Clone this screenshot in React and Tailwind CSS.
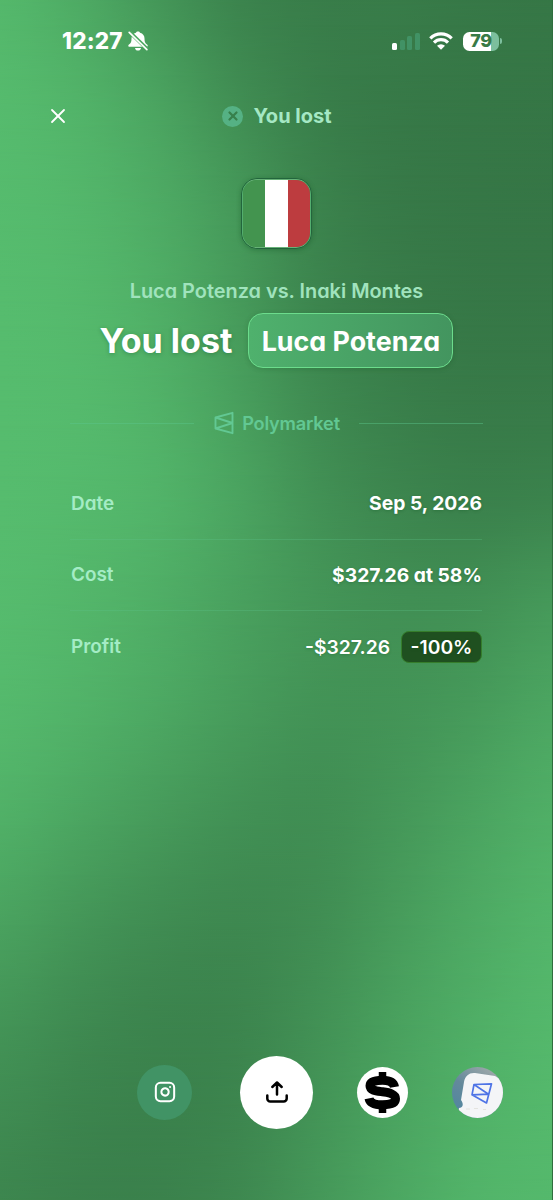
import { X, Instagram } from "lucide-react";

// Darkness of the backdrop, one row every 100px, from 0 (light) to 1 (dark)
const shades = [
  [0.06, 0.24, 0.52, 0.78, 0.88, 0.9, 0.95, 0.97],
  [0.02, 0.13, 0.35, 0.65, 0.86, 0.94, 0.97, 0.98],
  [0.01, 0.08, 0.25, 0.51, 0.8, 0.93, 0.97, 0.98],
  [0, 0.05, 0.2, 0.47, 0.77, 0.9, 0.96, 0.96],
  [0, 0.03, 0.15, 0.4, 0.69, 0.85, 0.92, 0.92],
  [0, 0.04, 0.13, 0.34, 0.6, 0.76, 0.83, 0.8],
  [0.01, 0.08, 0.2, 0.38, 0.54, 0.63, 0.62, 0.5],
  [0.04, 0.13, 0.27, 0.44, 0.57, 0.57, 0.48, 0.33],
  [0.14, 0.28, 0.44, 0.58, 0.64, 0.53, 0.36, 0.2],
  [0.32, 0.49, 0.63, 0.71, 0.66, 0.47, 0.27, 0.12],
  [0.52, 0.67, 0.77, 0.77, 0.62, 0.4, 0.21, 0.07],
  [0.67, 0.78, 0.82, 0.77, 0.57, 0.35, 0.16, 0.05],
  [0.76, 0.82, 0.82, 0.73, 0.52, 0.3, 0.12, 0.05],
];

const light = [86, 188, 110];
const dark = [53, 117, 69];

const smooth = (list, t) => {
  const i = Math.min(Math.floor(t), list.length - 2);
  const f = t - i;
  const p1 = list[i];
  const p2 = list[i + 1];
  const p0 = list[i - 1] ?? p1;
  const p3 = list[i + 2] ?? p2;
  return (
    p1 +
    0.5 *
      f *
      (p2 - p0 + f * (2 * p0 - 5 * p1 + 4 * p2 - p3 + f * (3 * (p1 - p2) + p3 - p0)))
  );
};

const shadeColor = (v) => {
  const s = Math.max(0, Math.min(1, v));
  return `rgb(${light.map((c, i) => (c + (dark[i] - c) * s).toFixed(1)).join(",")})`;
};

const STEP = 25;

const bands = Array.from({ length: 1200 / STEP + 1 }, (_, n) => {
  const row = shades[0].map((_, col) =>
    smooth(shades.map((r) => r[col]), (n * STEP) / 100)
  );
  const stops = Array.from({ length: 22 }, (_, k) => shadeColor(smooth(row, k / 3)));
  return `linear-gradient(to right, ${stops.join(",")})`;
});

const Backdrop = () => (
  <div className="[grid-area:1/1] grid h-[1200px] overflow-hidden">
    {bands.map((background, n) => {
      const mask =
        n === 0
          ? undefined
          : `linear-gradient(to bottom, transparent ${(n - 1) * STEP}px, black ${n * STEP}px)`;
      return (
        <div
          key={n}
          className="[grid-area:1/1] h-[1200px]"
          style={{ background, maskImage: mask }}
        />
      );
    })}
  </div>
);

const PolymarketLogo = ({ className }) => (
  <svg viewBox="0 0 20 24" fill="none" stroke="currentColor" className={className}>
    <path
      d="M18.500 1.800v20.400L1.500 17.500V6.500zM1.500 6.500l17 5.500-17 5.500"
      strokeWidth="1.900"
      strokeLinejoin="round"
    />
  </svg>
);

const MutedBell = () => (
  <svg viewBox="0 0 20 20" className="h-5 w-5">
    <path
      d="M10 .5c-1 0-1.800.5-2 1.300C5 2.600 3.500 4.800 3.500 7.600c0 3.400-.6 4.700-2.500 6-1.200.8-.8 2.200.5 2.200h17c1.300 0 1.700-1.400.5-2.200-1.900-1.300-2.500-2.600-2.500-6 0-2.800-1.500-5-4.500-5.800C11.800 1 11 .5 10 .5zM7 16.900h6c-.2 1.600-1.500 2.700-3 2.700s-2.800-1.100-3-2.700z"
      fill="white"
    />
    <path d="M1.500 1 19.500 18.500" stroke="#4fab63" strokeWidth="3.800" />
    <path d="M1.200 1.400 18.900 18.600" stroke="white" strokeWidth="1.600" strokeLinecap="round" />
  </svg>
);

const StatusBar = () => (
  <div className="flex h-[82px] items-center justify-between pl-[62px] pr-[50px]">
    <div className="flex items-center gap-1">
      <span className="w-[62px] text-[22.500px] font-extrabold tracking-[0.2px] whitespace-nowrap">
        12:27
      </span>
      <MutedBell />
    </div>
    <div className="flex items-center">
      <div className="flex items-end gap-[2.700px]">
        <span className="h-[7px] w-[5px] rounded-[1.500px] bg-white" />
        <span className="h-[10px] w-[5px] rounded-[1.500px] bg-[#419265]" />
        <span className="h-[14px] w-[5px] rounded-[1.500px] bg-[#419265]" />
        <span className="h-[17px] w-[5px] rounded-[1.500px] bg-[#419265]" />
      </div>
      <svg viewBox="0 0 24 18" className="ml-[9px] h-[18px] w-6" fill="none" stroke="white">
        <path d="M1.300 6.300a15.200 15.200 0 0 1 21.400 0" strokeWidth="3.200" />
        <path d="M5 10.600a9.900 9.900 0 0 1 14 0" strokeWidth="3.200" />
        <path d="M12 17.800 8 13.800a5.700 5.700 0 0 1 8 0z" fill="white" stroke="none" />
      </svg>
      <div className="ml-[10px] flex h-[19px] w-9 items-center justify-center rounded-[6.500px] bg-linear-to-r from-white from-79% to-[#7cbf9d] to-79%">
        <span className="text-[18px] font-extrabold leading-none tracking-[-0.3px] text-[#387a46]">
          79
        </span>
      </div>
      <span className="ml-[1px] h-[6px] w-[2px] rounded-r-full bg-[#7cbf9d]" />
    </div>
  </div>
);

const Header = () => (
  <div className="grid h-[68px] grid-cols-[1fr_auto_1fr] items-center">
    <X className="ml-[46px] h-6 w-6" strokeWidth={1.8} />
    <div className="ml-[2px] flex items-center gap-[10px]">
      <span className="flex h-[21px] w-[21px] items-center justify-center rounded-full bg-[#55b184]">
        <X className="h-[14px] w-[14px] text-[#37804b]" strokeWidth={3.8} />
      </span>
      <span className="text-[20px] font-bold text-[#a5e8c4]">You lost</span>
    </div>
  </div>
);

const ItalyFlag = () => (
  <div className="mx-auto mt-[28px] flex h-[71px] w-[71px] overflow-hidden rounded-[16px] border border-[#22653c] shadow-[0_1px_5px_rgba(0,60,20,0.3)]">
    <div className="flex flex-1 overflow-hidden rounded-[15px] border border-[#59b577]/80 border-y-[#8fd0a4]/50 bg-[#43944f]">
      <span className="w-[22px] bg-[#43944f]" />
      <span className="w-[23px] bg-white" />
      <span className="flex-1 bg-[#bd3c3f]" />
    </div>
  </div>
);

const Title = () => (
  <div className="mt-[28px] ml-px flex flex-col items-center">
    <p className="text-[19.900px] font-semibold leading-7 text-[#a0e3bd]">
      Luca Potenza vs. Inaki Montes
    </p>
    <div className="mt-2 flex items-center gap-4">
      <h1 className="pt-px text-[34px] font-bold leading-none text-shadow-[0_1px_4px_rgba(0,70,25,0.3)]">
        You lost
      </h1>
      <div className="flex h-[55px] w-[205px] items-center justify-center rounded-[15px] border border-[#6cdc8c] bg-linear-to-r from-[#4fb16d] to-[#43955f] pt-px text-[26.800px] font-bold shadow-[0_1px_5px_rgba(0,70,25,0.2)]">
        Luca Potenza
      </div>
    </div>
  </div>
);

const BrandDivider = () => (
  <div className="ml-[70px] mr-[69px] mt-[41px] flex h-7 items-center text-[#62c893]">
    <span className="h-px flex-1 bg-[#5cc58c]/45" />
    <PolymarketLogo className="ml-5 h-6 w-5" />
    <span className="ml-2 mr-[19px] pt-px text-[18.200px] font-semibold tracking-[-0.2px] [font-feature-settings:normal]">
      Polymarket
    </span>
    <span className="h-px flex-1 bg-[#5cc58c]/45" />
  </div>
);

const DetailRow = ({ label, children }) => (
  <div className="flex h-[71.500px] items-center justify-between pl-px pt-px">
    <span className="text-[18.900px] font-semibold text-[#a4ecc5]">{label}</span>
    <span className="flex items-center text-[19.300px] font-bold text-shadow-[0_1px_3px_rgba(0,70,25,0.25)]">
      {children}
    </span>
  </div>
);

const ActionBar = () => (
  <div className="mt-auto mb-[71px] flex h-[74px] items-center pl-[137px]">
    <button className="flex h-[55px] w-[55px] items-center justify-center rounded-full bg-[#419365]">
      <Instagram className="h-[22px] w-[22px]" strokeWidth={2.2} />
    </button>
    <button className="ml-12 flex h-[73px] w-[73px] items-center justify-center rounded-full bg-white">
      <svg
        viewBox="0 0 24 24"
        className="h-6 w-6"
        fill="none"
        stroke="black"
        strokeWidth="2.500"
        strokeLinecap="round"
        strokeLinejoin="round"
      >
        <path d="M12 14.500V3M7.300 7 12 2.500 16.700 7M2.300 15.500v3a3 3 0 0 0 3 3h13.400a3 3 0 0 0 3-3v-3" />
      </svg>
    </button>
    <button className="ml-11 flex h-[51px] w-[51px] items-center justify-center rounded-full bg-white">
      <svg viewBox="0 0 51 51" className="h-full w-full" fill="none" stroke="black">
        <path d="M25.500 5v6M25.500 40v6" strokeWidth="7.500" />
        <path
          d="M37.500 20C36.500 14.800 32 13.300 25.500 13.300c-7 0-12.500 1.500-12.500 5.500 0 4.500 5.500 5 12.500 6 7.500 1 13 2.500 13 7 0 4.500-5.500 6-13 6-7.500 0-12.500-1.500-13.500-6.500"
          strokeWidth="9"
        />
      </svg>
    </button>
    <button className="ml-[44px] h-[51px] w-[51px] overflow-hidden rounded-full">
      <svg viewBox="0 0 51 51" className="h-full w-full">
        <defs>
          <linearGradient id="sky" x1="0" y1="1" x2="0.8" y2="0">
            <stop offset="0" stopColor="#4b86a2" />
            <stop offset="0.5" stopColor="#64899b" />
            <stop offset="1" stopColor="#a2aaab" />
          </linearGradient>
        </defs>
        <rect width="51" height="51" fill="url(#sky)" />
        <path
          d="M12 15c1-6 5-9.500 11-9L43 9l8 5v37H5l2-10c4 0 5-4 2-8z"
          fill="#f4f5f7"
        />
        <path
          d="M39.500 16.800 34.500 36 20 27.800l2-10.300zM22 17.500l14.500 9.700L20 27.800"
          fill="none"
          stroke="#4f74e6"
          strokeWidth="1.700"
          strokeLinejoin="round"
        />
        <path d="M14 42h4M22 41.500h4M31 42.500h3" stroke="#e4e4df" strokeWidth="1" />
      </svg>
    </button>
  </div>
);

export default function App() {
  return (
    <div className="grid h-[1200px] w-[553px] overflow-hidden font-['Inter',sans-serif] text-white [font-feature-settings:'cv11'] [font-optical-sizing:none]">
      <Backdrop />
      <div className="z-10 [grid-area:1/1] flex h-[1200px] flex-col border-r border-[#2f6e3e]">
        <StatusBar />
        <Header />
        <ItalyFlag />
        <Title />
        <BrandDivider />
        <div className="mx-[70px] mt-[31px] divide-y divide-[#5cc58c]/30">
          <DetailRow label="Date">Sep 5, 2026</DetailRow>
          <DetailRow label="Cost">$327.26 at 58%</DetailRow>
          <DetailRow label="Profit">
            <span className="font-semibold">-$327.26</span>
            <span className="ml-[11px] flex h-8 w-[81px] items-center justify-center rounded-[8px] border border-[#357d2b] bg-[#1f5020] font-semibold">
              -100%
            </span>
          </DetailRow>
        </div>
        <ActionBar />
      </div>
    </div>
  );
}
